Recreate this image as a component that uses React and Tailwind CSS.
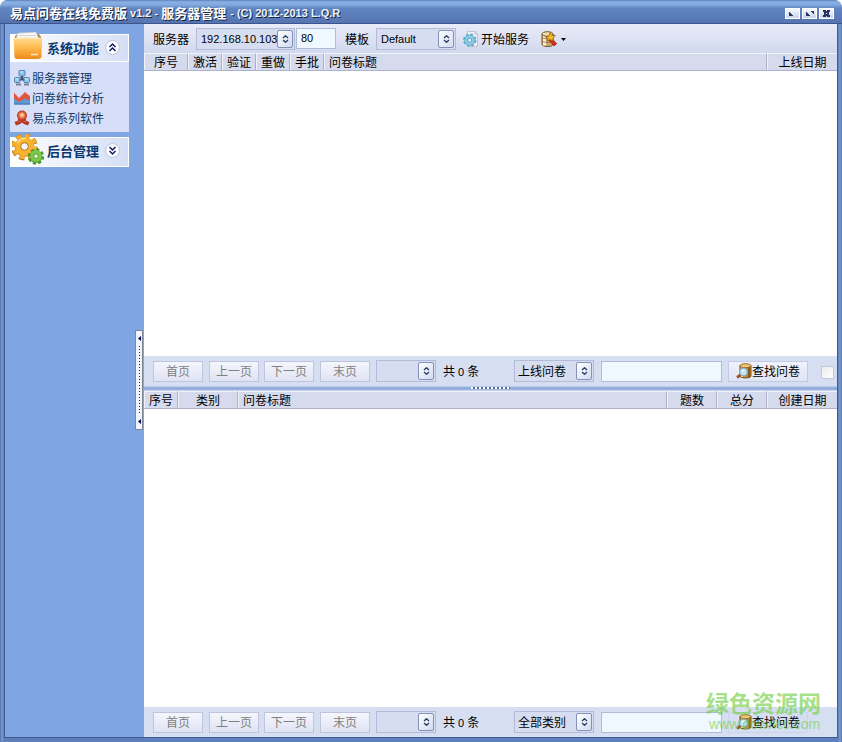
import { clsx } from "clsx";

const FolderIcon = () => (
  <svg className="w-[30px] h-[30px] shrink-0" viewBox="0 0 30 30">
    <defs>
      <linearGradient id="folder" x1="0" y1="0" x2="0" y2="1">
        <stop offset="0" stopColor="#ffdc92" />
        <stop offset="0.5" stopColor="#fdb84c" />
        <stop offset="1" stopColor="#ee8a1c" />
      </linearGradient>
    </defs>
    <path d="M2 5 L5 3 H26 L28 6 V12 H1 Z" fill="#b98b4a" />
    <path d="M3 8 L5 2 L23 1 L26 8 Z" fill="#f6f6f6" stroke="#b9b9b9" strokeWidth="0.6" />
    <path d="M6 4.500 H23" stroke="#cfcfcf" strokeWidth="0.8" />
    <path d="M0.500 7 Q14 6 29 7 L28.500 26 Q28 28 25 28 H4 Q1.500 28 1.500 26 Z" fill="url(#folder)" />
    <path d="M1 7.500 Q14 6.500 28.500 7.500" fill="none" stroke="#ffedc2" />
    <path d="M18 23.500 H25" stroke="#ffe9bd" strokeWidth="1.500" />
  </svg>
);

const GearsIcon = () => (
  <svg className="w-[33px] h-[32px] shrink-0" viewBox="0 0 33 32">
    <circle cx="12.500" cy="14" r="11" fill="none" stroke="#b9761b" strokeWidth="5" strokeDasharray="5 3.640" />
    <circle cx="12.500" cy="14" r="9.800" fill="#b9761b" />
    <circle cx="12.500" cy="13.500" r="10.500" fill="none" stroke="#f5ae2a" strokeWidth="4.500" strokeDasharray="4.600 3.650" />
    <circle cx="12.500" cy="13.500" r="6.600" fill="none" stroke="#f8b430" strokeWidth="5.600" />
    <circle cx="12.500" cy="13.500" r="3.800" fill="#f3f4fb" stroke="#b9761b" />
    <path d="M5.500 10 Q8 5 14 5.500" fill="none" stroke="#ffe08a" strokeWidth="1.500" />
    <circle cx="24" cy="23.500" r="6.400" fill="#4d962a" />
    <circle cx="24" cy="23.500" r="6.600" fill="none" stroke="#4d962a" strokeWidth="3.200" strokeDasharray="3 2.180" />
    <circle cx="24" cy="23" r="4" fill="none" stroke="#7cc947" strokeWidth="3.800" />
    <circle cx="24" cy="23.200" r="2.100" fill="#f2f6ef" stroke="#428b20" strokeWidth="0.7" />
  </svg>
);

const NetworkIcon = () => (
  <svg className="w-4 h-4 shrink-0" viewBox="0 0 16 16">
    <path d="M8 5 V9 L4 11 M8 9 L12 11" fill="none" stroke="#39506b" strokeWidth="2" />
    <rect x="5" y="0.500" width="6" height="5.500" rx="1" fill="#86c3f2" stroke="#5481b5" />
    <rect x="6.500" y="6.500" width="3" height="2.500" fill="#4c5560" />
    <rect x="0.500" y="7.500" width="5.500" height="5" rx="1" fill="#8fc9f4" stroke="#5481b5" />
    <rect x="10" y="7.500" width="5.500" height="5" rx="1" fill="#8fc9f4" stroke="#5481b5" />
    <path d="M6 2 H9 M1.500 9 H4 M11 9 H14" stroke="#d4edff" />
    <path d="M2 14.500 H7 M10 14.500 H15" stroke="#78828e" strokeWidth="2" />
  </svg>
);

const ChartIcon = () => (
  <svg className="w-4 h-4 shrink-0" viewBox="0 0 16 16">
    <path d="M0 2.500 L5 8 L11 2 L16 6 V14 H0 Z" fill="#df5441" />
    <path d="M0 3 L5 8.500 L11 2.500 L16 6.500" fill="none" stroke="#ef8167" />
    <path d="M0 8.500 L5 12 L11 8.500 L16 11 V14.500 H0 Z" fill="#5d99d4" />
    <path d="M0 14 H16" stroke="#3a75b0" />
  </svg>
);

const MedalIcon = () => (
  <svg className="w-4 h-4 shrink-0" viewBox="0 0 16 16">
    <path d="M4.500 8 L3.500 11 L0.500 12 L2 15.500 L6 14 L8 12.500 L10 14 L14 15.500 L15.500 12 L12.500 11 L11.500 8 Z" fill="#b53625" />
    <path d="M4 12 L6.500 11 M12 12 L9.500 11" stroke="#e0634a" strokeWidth="1.300" />
    <circle cx="8" cy="5.500" r="5" fill="#bd3d22" />
    <circle cx="8" cy="5.300" r="3.500" fill="#f0864d" stroke="#dc5a37" />
    <circle cx="8" cy="5" r="1.800" fill="#f9cfa0" />
  </svg>
);

const ServiceIcon = () => (
  <svg className="w-4 h-4 shrink-0" viewBox="0 0 16 16">
    <path d="M4.500 0.500 H12 L14.500 3 V15.500 H4.500 Z" fill="#eff1f5" stroke="#bfc3cd" />
    <path d="M12 0.500 V3 H14.500" fill="none" stroke="#bfc3cd" />
    <circle cx="6.700" cy="9.200" r="5.700" fill="none" stroke="#5da9cb" strokeWidth="2" strokeDasharray="2.600 1.877" />
    <circle cx="6.700" cy="9.200" r="3.700" fill="none" stroke="#8fcde6" strokeWidth="3" />
    <circle cx="6.700" cy="9.200" r="5" fill="none" stroke="#58a4c8" strokeWidth="0.7" />
    <circle cx="6.700" cy="9.200" r="2" fill="#eef8fc" stroke="#4e9fc4" />
  </svg>
);

const DatabaseToolIcon = () => (
  <svg className="w-4 h-4 shrink-0" viewBox="0 0 16 16">
    <path d="M1 3 V13 Q1 15.500 6.500 15.500 Q12 15.500 12 13 V3" fill="#cba86c" stroke="#6f512b" />
    <path d="M3.500 4 V14.500" stroke="#fff3d2" strokeWidth="3" />
    <ellipse cx="6.500" cy="3" rx="5.500" ry="2.300" fill="#f2dda8" stroke="#6f512b" />
    <path d="M1 7 Q6 9 12 7 M1 10.500 Q6 12.500 12 10.500" fill="none" stroke="#8a683a" strokeWidth="0.8" />
    <path d="M9 8 L14.500 14" stroke="#7d1b12" strokeWidth="4" />
    <path d="M9 8 L14.500 14" stroke="#dd2c20" strokeWidth="2.800" />
    <path d="M4.500 6 L8 5 L9 1.500 L11 4.500 L14.500 4.500 L12 7 L12 10 L9 8.500 L6 10 L7 7.500 Z" fill="#f5bb22" stroke="#8d5c12" strokeWidth="0.7" />
  </svg>
);

const SearchDbIcon = () => (
  <svg className="w-4 h-4 shrink-0" viewBox="0 0 16 16">
    <path d="M4 2.500 V13 Q4 15 9.500 15 Q15 15 15 13 V2.500" fill="#c58c35" stroke="#75501f" />
    <path d="M6 4 V14" stroke="#f6dd9a" strokeWidth="2" />
    <path d="M13 4 V14" stroke="#8c591b" strokeWidth="2" />
    <ellipse cx="9.500" cy="2.700" rx="5.500" ry="2" fill="#efc86e" stroke="#8a622a" />
    <path d="M1 14.500 L4.500 12" stroke="#a94f25" strokeWidth="2.800" />
    <circle cx="7.500" cy="9" r="3.800" fill="#bde7fa" stroke="#8aa9ba" strokeWidth="1.200" />
    <path d="M6 9 Q6.500 7 8.500 7" fill="none" stroke="#ffffff" />
  </svg>
);

const Chevrons = ({ up }) => (
  <svg className="w-[15px] h-[15px] shrink-0" viewBox="0 0 15 15">
    <circle cx="7.500" cy="7.500" r="6.900" fill="#ffffff" stroke="#b7c1dc" />
    <path
      d={up ? "M4.500 7 L7.500 4 L10.500 7 M4.500 11 L7.500 8 L10.500 11" : "M4.500 4 L7.500 7 L10.500 4 M4.500 8 L7.500 11 L10.500 8"}
      fill="none"
      stroke="#101a68"
      strokeWidth="1.500"
    />
  </svg>
);

const Combo = ({ value, className }) => (
  <div className={clsx("flex items-center justify-between border border-[#b3bbd8] bg-[#d6ddf1] h-[22px] pl-1 pr-px whitespace-nowrap shrink-0", className)}>
    <span className="pt-px">{value}</span>
    <button className="flex items-center justify-center w-4 h-[18px] shrink-0 rounded-[2px] border border-[#8093ba] bg-gradient-to-br from-white to-[#d2daef]">
      <svg className="w-[7px] h-[8px]" viewBox="0 0 7 8">
        <path d="M1 3 L3.500 0.700 L6 3 M1 5 L3.500 7.300 L6 5" fill="none" stroke="#293e66" strokeWidth="1.300" />
      </svg>
    </button>
  </div>
);

const HeaderRow = ({ columns }) => (
  <div className="flex h-[18px] shrink-0 border-b border-[#aeb1cd] bg-[#d6daed]">
    {columns.map((col, i) => (
      <div
        key={col.label}
        className={clsx(
          "flex items-center border-t border-l border-[#f1f2fa] pt-[2px] leading-none",
          i < columns.length - 1 && "border-r border-r-[#adafcb]",
          col.left ? "pl-1" : "justify-center",
          col.width
        )}
      >
        {col.label}
      </div>
    ))}
  </div>
);

const PageButton = ({ children, className }) => (
  <button className={clsx("w-[50px] h-[21px] pt-[2px] shrink-0 border border-[#bec5dd] bg-gradient-to-b from-[#f5f6fd] to-[#dfe3f3] text-[#808080] leading-none", className)}>
    {children}
  </button>
);

const Pager = ({ filter, checkbox, faded }) => (
  <div className="flex items-center h-[30px] shrink-0 bg-[#d6def2] pl-[9px]">
    <PageButton className="mr-1.5">首页</PageButton>
    <PageButton className="mr-[5px]">上一页</PageButton>
    <PageButton className="mr-1.5">下一页</PageButton>
    <PageButton className="mr-1.5">末页</PageButton>
    <Combo value="" className="w-[60px]" />
    <span className="w-[78px] pl-[7px] pt-[2px] flex items-center gap-[3px] shrink-0">
      共<span className="text-[11px]">0</span>条
    </span>
    <Combo value={filter} className="w-20 pl-[3px]" />
    <div className="ml-[7px] w-[121px] h-[21px] shrink-0 border border-[#b2bad8] bg-[#f0f8ff]" />
    <button
      className={clsx(
        "ml-1.5 w-20 h-[21px] shrink-0 border flex items-center justify-center leading-none",
        faded ? "border-[#cbd4e9]" : "border-[#c3cae1] bg-gradient-to-b from-[#eff2fb] to-[#dfe4f4]"
      )}
    >
      <SearchDbIcon />
      <span className="pt-[2px]">查找问卷</span>
    </button>
    {checkbox && <span className="ml-[13px] mt-[3px] w-[13px] h-[13px] shrink-0 border border-[#c2c9df] bg-gradient-to-br from-[#ececef] to-white" />}
  </div>
);

const topColumns = [
  { label: "序号", width: "w-[44px]" },
  { label: "激活", width: "w-[34px]" },
  { label: "验证", width: "w-[34px]" },
  { label: "重做", width: "w-[34px]" },
  { label: "手批", width: "w-[34px]" },
  { label: "问卷标题", width: "flex-1", left: true },
  { label: "上线日期", width: "w-[70px]" },
];

const bottomColumns = [
  { label: "序号", width: "w-[34px]" },
  { label: "类别", width: "w-[60px]" },
  { label: "问卷标题", width: "flex-1", left: true },
  { label: "题数", width: "w-[50px]" },
  { label: "总分", width: "w-[50px]" },
  { label: "创建日期", width: "w-[70px]" },
];

const menuItems = [
  { label: "服务器管理", Icon: NetworkIcon },
  { label: "问卷统计分析", Icon: ChartIcon },
  { label: "易点系列软件", Icon: MedalIcon },
];

const windowButtons = [
  "M3 3 V7 H7 Z",
  "M7 2 H11 V6 Z M3 3 V7 H7 Z",
  "M3 1 H6 V2 H7 V1 H10 V3 H9 V6 H10 V8 H7 V7 H6 V8 H3 V6 H4 V3 H3 Z M6 4 V5 H7 V4 Z",
];

const TitleBar = () => (
  <header className="flex items-center justify-between h-6 shrink-0 pl-[10px] pr-2 pt-[3px] border-b border-[#3b568e] bg-[linear-gradient(to_bottom,#5e82bd_0px,#8ab1e5_2px,#81a8df_5px,#6186c2_8px,#5878b4_20px,#5573ae_24px)]">
    <h1 className="flex items-center whitespace-nowrap font-bold text-white text-[11px] [text-shadow:1px_1px_0_#172442]">
      <span className="text-[13px]">易点问卷在线免费版</span>
      <span className="mx-[3px] text-[#eef2fa]">v1.2 -</span>
      <span className="text-[13px]">服务器管理</span>
      <span className="ml-1 text-[#eef2fa]">- (C) 2012-2013 L.Q.R</span>
    </h1>
    <div className="flex gap-[2px]">
      {windowButtons.map((d) => (
        <button key={d} className="flex w-[15px] h-[11px] border border-white bg-gradient-to-b from-[#f7f9fe] to-[#c8d3ea]">
          <svg className="w-[13px] h-[9px]" viewBox="0 0 13 9" shapeRendering="crispEdges">
            <path d={d} fill="#26365e" fillRule="evenodd" />
          </svg>
        </button>
      ))}
    </div>
  </header>
);

const Sidebar = () => (
  <aside className="flex w-[139px] shrink-0 bg-[#7fa6e3]">
    <nav className="w-[124px] pl-[5px] pt-[10px] text-[#143864]">
      <div className="flex items-center h-7 border border-white bg-gradient-to-r from-white to-[#d5def5] pl-[2px]">
        <div className="mb-[4px]"><FolderIcon /></div>
        <span className="ml-1 w-[52px] text-[13px] font-bold leading-none text-[#0b376d]">系统功能</span>
        <span className="ml-[6px] mb-px"><Chevrons up /></span>
      </div>
      <ul className="h-[70px] bg-[#d6dff7] pt-[6px] pl-[4px]">
        {menuItems.map(({ label, Icon }) => (
          <li key={label} className="flex items-center gap-[2px] h-5 leading-none whitespace-nowrap">
            <Icon />
            <span className="pt-px">{label}</span>
          </li>
        ))}
      </ul>
      <div className="mt-[5px] flex items-center h-[30px] border border-white bg-gradient-to-r from-white to-[#d5def5] pl-px">
        <div className="mb-[6px]"><GearsIcon /></div>
        <span className="ml-[2px] mb-[2px] w-[52px] text-[13px] font-bold leading-none text-[#0b376d]">后台管理</span>
        <span className="ml-[6px] mb-[3px]"><Chevrons /></span>
      </div>
    </nav>
    {/* collapse handle */}
    <div className="ml-[6px] mt-[306px] w-2 h-[100px] border border-[#7c8797] bg-[#f1f4fb] flex flex-col items-center justify-between py-[5px]">
      <svg className="w-[3px] h-[5px]" viewBox="0 0 3 5"><path d="M3 0 V5 L0 2.500 Z" fill="#06064b" /></svg>
      <div className="w-px h-[68px] bg-[repeating-linear-gradient(to_bottom,#16165e_0px,#16165e_1px,transparent_1px,transparent_3px)]" />
      <svg className="w-[3px] h-[5px]" viewBox="0 0 3 5"><path d="M3 0 V5 L0 2.500 Z" fill="#06064b" /></svg>
    </div>
  </aside>
);

const Toolbar = () => (
  <div className="flex items-center h-[29px] shrink-0 pl-[9px] bg-gradient-to-b from-[#e8ebf8] to-[#d2d9ee]">
    <span className="w-[43px] pt-[2px]">服务器</span>
    <Combo value="192.168.10.103" className="w-[99px] text-[11px]" />
    <div className="ml-px w-10 h-[21px] border border-[#b3bbd9] bg-[#f0f8ff] pl-1 text-[11px] leading-[19px]">80</div>
    <span className="ml-[9px] w-[31px] pt-[2px]">模板</span>
    <Combo value="Default" className="w-20 text-[11px]" />
    <button className="ml-[7px] flex items-center gap-[2px] whitespace-nowrap">
      <ServiceIcon />
      <span className="pt-[2px]">开始服务</span>
    </button>
    <button className="ml-[12px] flex items-center gap-1">
      <DatabaseToolIcon />
      <svg className="w-[5px] h-[3px] mt-[2px]" viewBox="0 0 5 3"><path d="M0 0 H5 L2.500 3 Z" fill="#000" /></svg>
    </button>
  </div>
);

export default function App() {
  return (
    <div className="bg-white w-[842px] h-[742px] overflow-hidden text-black text-[12px] leading-none font-['Liberation_Sans','Noto_Sans_CJK_SC',sans-serif]">
      <div className="relative flex flex-col h-full overflow-hidden rounded-t-[8px] bg-[#6a8fc9]">
        <TitleBar />
        <div className="flex flex-1 min-h-0 pl-1 pr-1 pb-1 bg-[linear-gradient(to_right,#5673a8_0px,#769dd5_2px,#5d80ba_4px,#5d80ba_838px,#769dd5_840px,#5673a8_842px)]">
          <div className="flex flex-1 min-w-0 border-x border-b border-[#3f5b94]">
            <Sidebar />
            <main className="flex flex-col flex-1 min-w-0 bg-white">
              <Toolbar />
              <HeaderRow columns={topColumns} />
              <div className="h-[285px] shrink-0" />
              <Pager filter="上线问卷" checkbox />
              <div className="flex justify-center h-[5px] shrink-0 bg-gradient-to-b from-[#c5d2ee] via-[#83a3d9] to-[#d1daf0]">
                <div className="w-[39px] h-[2px] mt-px bg-[repeating-linear-gradient(to_right,#fff_0px,#fff_2px,#536996_2px,#536996_4px)]" />
              </div>
              <HeaderRow columns={bottomColumns} />
              <div className="flex-1" />
              <Pager filter="全部类别" faded />
            </main>
          </div>
        </div>
        {/* watermark */}
        <div className="absolute left-[706px] top-[692px] text-[#72cf43]/65 whitespace-nowrap pointer-events-none">
          <p className="text-[23px] font-bold leading-[25px]">绿色资源网</p>
          <p className="pl-[3px] text-[14px] leading-[15px]">www.downcc.com</p>
        </div>
      </div>
    </div>
  );
}
